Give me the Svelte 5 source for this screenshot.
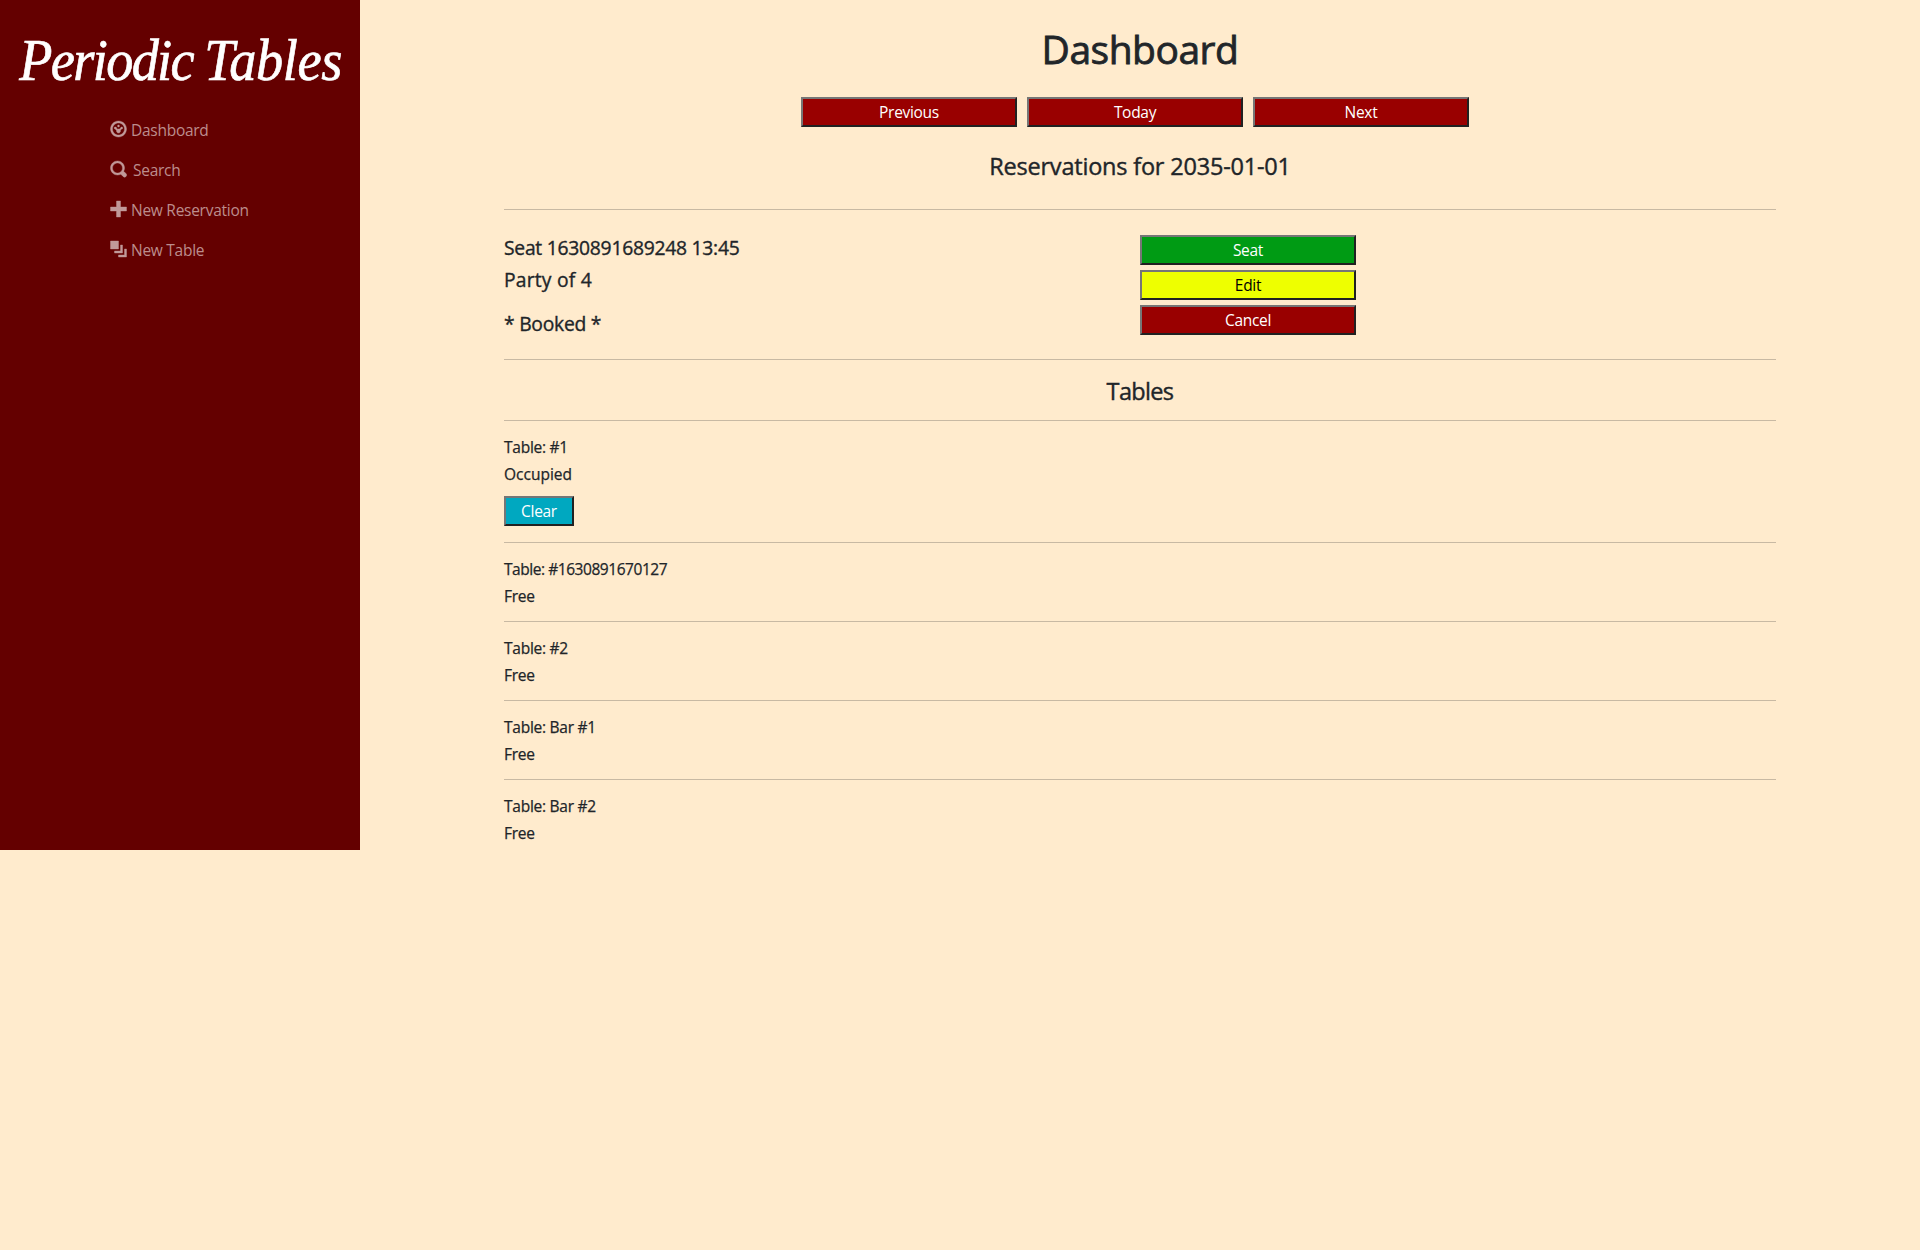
<script>
  const links = [
    { name: 'Dashboard', icon: 'M4 0c-2.2 0-4 1.8-4 4s1.8 4 4 4 4-1.8 4-4-1.8-4-4-4zm0 1c1.66 0 3 1.34 3 3s-1.34 3-3 3-3-1.34-3-3 1.34-3 3-3zm0 1c-.28 0-.5.22-.5.5s.22.5.5.5.5-.22.5-.5-.22-.5-.5-.5zm-1.66 1c-.28 0-.5.22-.5.5s.22.5.5.5l.68.7c-.02.08-.02.16-.02.3 0 .55.45 1 1 1s1-.45 1-1c0-.14-.03-.27-.08-.4l.68-.6c.28 0 .5-.22.5-.5s-.22-.5-.5-.5-.5.22-.5.5l-.7.56c-.13-.04-.26-.06-.4-.06-.13 0-.26.03-.38.07l-.63-.57c0-.28-.22-.5-.5-.5z' },
    { name: 'Search', icon: 'M3.5 0c-1.93 0-3.5 1.57-3.5 3.5s1.57 3.5 3.5 3.5c.59 0 1.17-.14 1.66-.41a1 1 0 0 0 .13.13l1 1a1.02 1.02 0 1 0 1.44-1.44l-1-1a1 1 0 0 0-.16-.13c.27-.49.44-1.06.44-1.66 0-1.93-1.55-3.5-3.5-3.5zm.02 1c1.39 0 2.48 1.11 2.48 2.5 0 .66-.24 1.27-.66 1.72l-.03.03a1 1 0 0 0-.13.13c-.44.4-1.04.63-1.69.63-1.39 0-2.5-1.11-2.5-2.5s1.11-2.5 2.5-2.5z' },
    { name: 'New Reservation', icon: 'M3 0v3h-3v2h3v3h2v-3h3v-2h-3v-3h-2z' },
    { name: 'New Table', icon: 'M0 0v4h4v-4h-4zm5 2v3h-3v1h4v-4h-1zm2 2v3h-3v1h4v-4h-1z' }
  ];
  const tables = [
    { name: '#1', occupied: true },
    { name: '#1630891670127', occupied: false },
    { name: '#2', occupied: false },
    { name: 'Bar #1', occupied: false },
    { name: 'Bar #2', occupied: false }
  ];
</script>

<div class="layout">
  <nav>
    <div class="brand"><span>Periodic</span> Tables</div>
    <ul>
      {#each links as link}
        <li class:search={link.name === 'Search'}>
          <svg viewBox="0 0 8 8"><path d={link.icon} /></svg>
          <span>{link.name}</span>
        </li>
      {/each}
    </ul>
  </nav>
  <main>
    <h1>Dashboard</h1>
    <div class="pager">
      <button class="red">Previous</button>
      <button class="red">Today</button>
      <button class="red">Next</button>
    </div>
    <h4 class="date">Reservations for 2035-01-01</h4>
    <section class="reservation">
      <div class="info">
        <h5 class="seat">Seat 1630891689248 13:45</h5>
        <h5 class="party">Party of 4</h5>
        <h5 class="status">* Booked *</h5>
      </div>
      <div class="actions">
        <button class="green">Seat</button>
        <button class="yellow">Edit</button>
        <button class="red">Cancel</button>
      </div>
    </section>
    <h4 class="tables">Tables</h4>
    {#each tables as table}
      <section class="table">
        <h6 class:long={table.name.length > 8}>Table: {table.name}</h6>
        <h6 class:occupied={table.occupied}>{table.occupied ? 'Occupied' : 'Free'}</h6>
        {#if table.occupied}
          <button class="clear">Clear</button>
        {/if}
      </section>
    {/each}
  </main>
</div>

<style>
  :global(body) {
    background: #ffebcd;
    color: #212529;
    font-family: 'Open Sans', 'Noto Sans', sans-serif;
  }
  .layout { display: flex; height: 850px; }
  nav { width: 360px; flex: none; background: #640000; }
  .brand {
    width: 360px;
    height: 110px;
    box-sizing: border-box;
    padding: 26px 0 0 21px;
    font: italic 59px/68px 'Liberation Serif', serif;
    letter-spacing: -0.4px;
    word-spacing: -2px;
    color: #fff;
    -webkit-text-stroke: 0.7px #fff;
    white-space: nowrap;
    transform: scaleX(0.92);
    transform-origin: 0 0;
  }
  .brand span { letter-spacing: -1.8px; }
  ul { list-style: none; margin: 0; padding: 0 0 0 110px; }
  li {
    display: flex;
    align-items: center;
    gap: 4px;
    height: 40px;
    font-size: 15.5px;
    letter-spacing: -0.27px;
    color: #bc8d8d;
  }
  li.search { gap: 6px; }
  svg { width: 17px; height: 16px; fill: #c19999; stroke: #c19999; stroke-width: 0.2; margin-top: -2px; overflow: visible; }
  main { width: 1272px; margin-left: 144px; }
  h1, h4, h5, h6 { margin: 0; font-weight: 500; white-space: nowrap; -webkit-text-stroke: 0.25px #212529; }
  h1 { padding-top: 24px; height: 73px; font-size: 39px; line-height: 50px; letter-spacing: -0.5px; text-align: center; -webkit-text-stroke-width: 0.8px; }
  .pager { display: flex; justify-content: center; gap: 10px; margin-right: 10px; }
  button {
    display: block;
    width: 216px;
    height: 30px;
    padding: 0;
    border: 2px solid;
    border-color: #767676 #212121 #212121 #767676;
    border-radius: 0;
    font: 15.5px/26px 'Open Sans', 'Noto Sans', sans-serif;
    letter-spacing: -0.3px;
    color: #fff;
  }
  .red { background: #990000; }
  .green { background: #009b14; }
  .yellow { background: #eeff00; color: #000; }
  h4 { font-size: 23.5px; text-align: center; -webkit-text-stroke-width: 0.4px; }
  .date { height: 82px; line-height: 78px; letter-spacing: -0.2px; }
  .reservation {
    display: grid;
    grid-template-columns: 1fr 1fr;
    height: 149px;
    border-top: 1px solid #c8b9a3;
    border-bottom: 1px solid #c8b9a3;
  }
  .info { padding-top: 22px; }
  h5 { font-size: 19.3px; line-height: 32px; letter-spacing: -0.25px; -webkit-text-stroke-width: 0.35px; }
  .party { letter-spacing: 0.2px; }
  .status { margin-top: 12px; }
  .actions { display: flex; flex-direction: column; gap: 5px; padding-top: 25px; }
  .tables { height: 60px; line-height: 62px; letter-spacing: -0.65px; }
  .table { min-height: 78px; border-top: 1px solid #c8b9a3; }
  h6 { font-size: 15.5px; line-height: 27px; letter-spacing: -0.25px; }
  h6:first-child { padding-top: 13px; }
  h6.long { letter-spacing: -0.45px; }
  h6.occupied { letter-spacing: 0; }
  .clear { width: 70px; margin: 8px 0 16px; background: #00a8c0; }
</style>
